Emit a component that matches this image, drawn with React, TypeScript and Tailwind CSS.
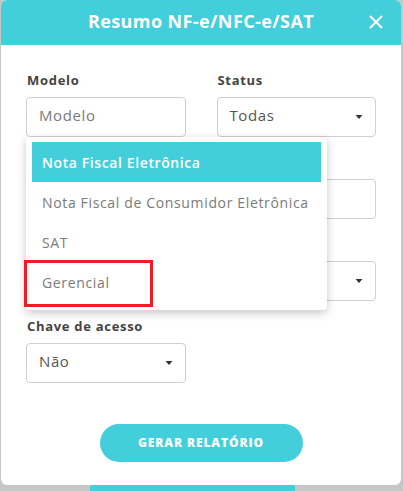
import React from 'react';

const font = { fontFamily: '"Open Sans", "Liberation Sans", sans-serif' };

function Caret() {
  return (
    <svg width="8" height="5" viewBox="0 0 8 5" className="shrink-0">
      <path d="M0.5 0 L7.5 0 L4 4 Z" fill="#333" />
    </svg>
  );
}

function Field({ label, value, placeholder, select }: { label: string; value?: string; placeholder?: string; select?: boolean }) {
  return (
    <div className="flex flex-col">
      <label className="h-[20px] leading-[20px] text-[13px] font-bold text-[#444] tracking-[0.7px] mb-[7px] pl-[1px]">{label}</label>
      <div className="h-[40px] border border-[#cfcfcf] rounded-[4px] flex items-center justify-between pl-[12px] pr-[12px]">
        <span className={placeholder ? 'text-[15px] text-[#7a7a7a] tracking-[0.6px] -mt-[3px]' : 'text-[15px] text-[#555] tracking-[0.6px] -mt-[3px]'}>{value ?? placeholder}</span>
        {select && <Caret />}
      </div>
    </div>
  );
}

export default function App() {
  const options = ['Nota Fiscal Eletrônica', 'Nota Fiscal de Consumidor Eletrônica', 'SAT', 'Gerencial'];

  return (
    <div className="w-[403px] h-[491px] bg-[#c6c6c6] overflow-hidden flex flex-col" style={font}>
      <div className="ml-[1px] w-[400px] h-[485px] shrink-0 bg-white rounded-[6px] overflow-hidden flex flex-col relative">
        <header className="h-[45px] bg-[#42cfdb] flex items-center justify-center relative">
          <h1 className="text-white text-[18px] font-bold tracking-[0.4px] -mt-[2px]">Resumo NF-e/NFC-e/SAT</h1>
          <button className="absolute right-[18px] top-[15px] w-[14px] h-[14px]">
            <svg width="14" height="14" viewBox="0 0 14 14">
              <path d="M1 1 L13 13 M13 1 L1 13" stroke="white" strokeWidth="2" />
            </svg>
          </button>
        </header>

        <div className="flex-1 px-[25px] pt-[25px] flex flex-col">
          <div className="grid grid-cols-2 gap-x-[31px] gap-y-[15px]">
            <Field label="Modelo" placeholder="Modelo" />
            <Field label="Status" value="Todas" select />
            <Field label="" placeholder="" />
            <Field label="" placeholder="" />
            <Field label="" placeholder="" />
            <Field label="" value="" select />
            <Field label="Chave de acesso" value="Não" select />
          </div>

          <div className="flex justify-center mt-[41px]">
            <button className="w-[203px] h-[38px] rounded-full bg-[#42cfdb] text-white text-[12px] font-extrabold tracking-[0.9px]">
              GERAR RELATÓRIO
            </button>
          </div>
        </div>

        {/* dropdown menu opened under Modelo */}
        <div className="absolute left-[25px] top-[137px] w-[301px] bg-white rounded-[4px] shadow-[0_3px_10px_rgba(0,0,0,0.22)] px-[6px] pt-[5px] pb-[8px]">
          {options.map((o, i) => (
            <div
              key={o}
              className={
                i === 0
                  ? 'h-[40px] flex items-center px-[10px] bg-[#42cfdb] text-white text-[14px] font-semibold tracking-[0.6px]'
                  : 'h-[40px] flex items-center px-[10px] text-[#7a7a7a] text-[14px] tracking-[0.65px]'
              }
            >
              {o}
            </div>
          ))}
        </div>

        {/* red highlight box */}
        <div className="absolute left-[23px] top-[260px] w-[129px] h-[47px] border-[3px] border-[#ee1c25]" />
      </div>
      <div className="ml-[90px] w-[205px] h-[10px] bg-[#42cfdb] rounded-t-[2px]" />
    </div>
  );
}
